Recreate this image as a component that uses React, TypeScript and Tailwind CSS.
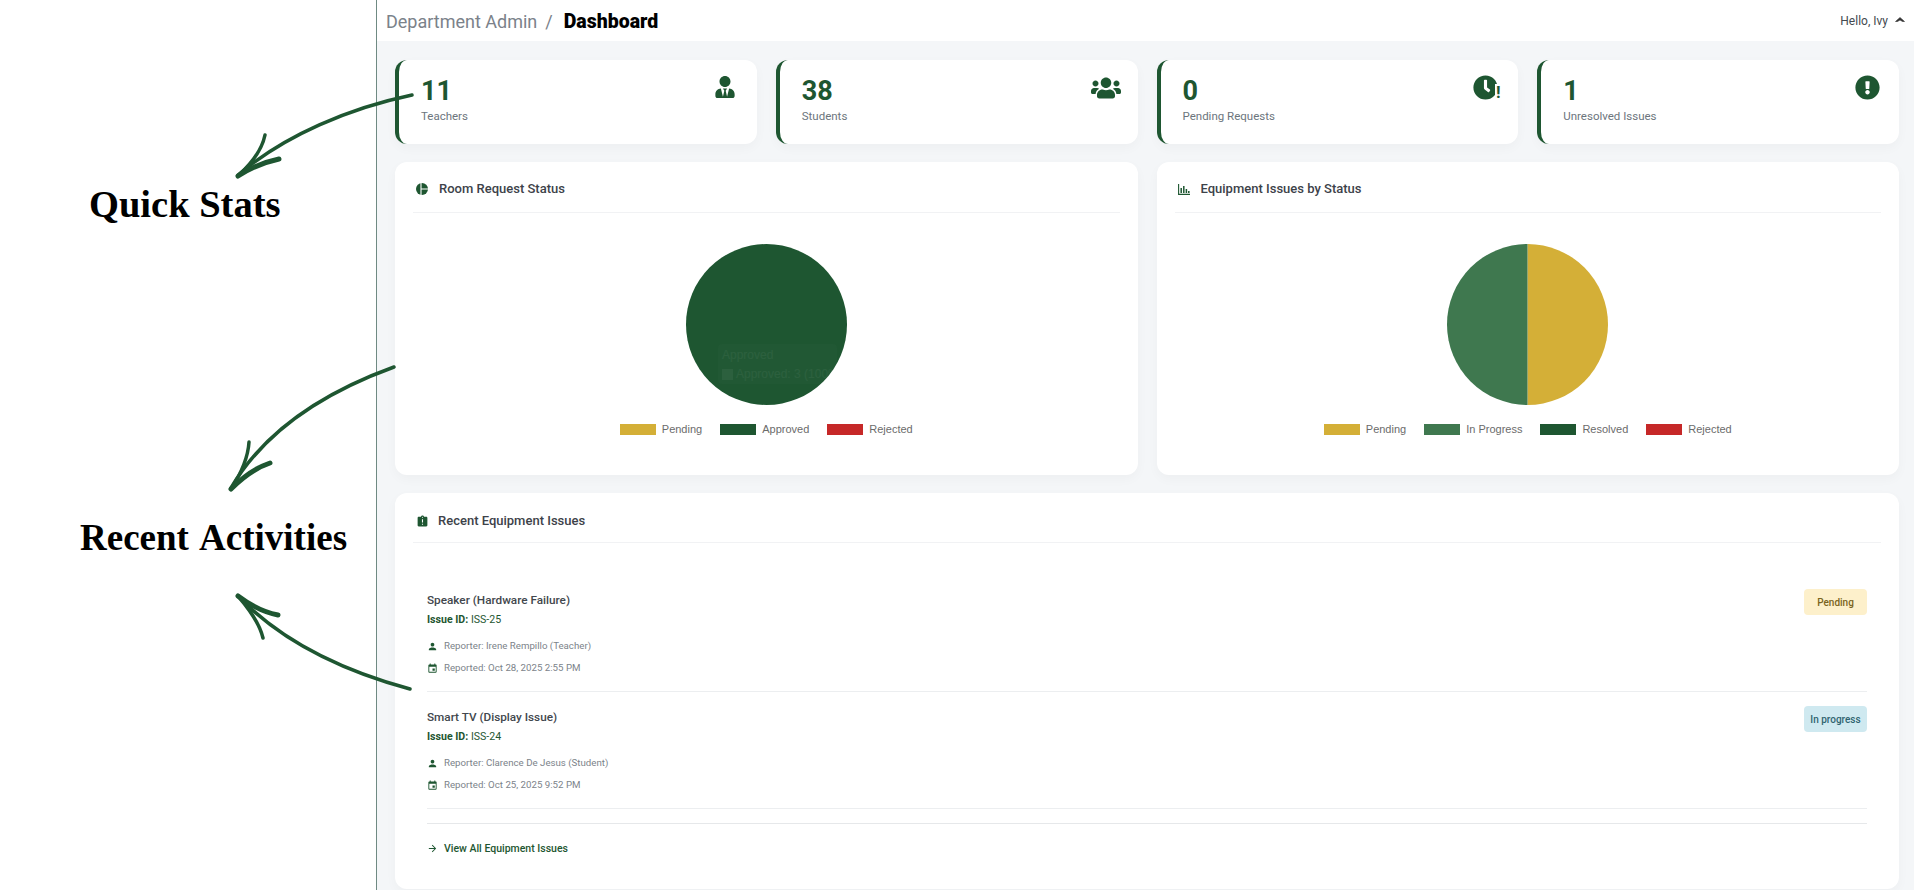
import { FaUserTie, FaUsers, FaClock, FaExclamationCircle } from "react-icons/fa"
import { MdAssignmentLate, MdPerson, MdEvent, MdArrowForward } from "react-icons/md"
import type { ReactNode } from "react"

const GREEN = "#1e5631"

function StatCard({ value, label, icon }: { value: string; label: string; icon: ReactNode }) {
  return (
    <div className="flex justify-between h-[84px] bg-white rounded-[12px] border-l-4 border-[#1e5631] pl-[22px] pr-[18px] pt-[14px] shadow-[0_4px_12px_rgba(0,0,0,0.03)]">
      <div>
        <div className="text-[27px] leading-[34px] font-bold text-[#1e5631]">{value}</div>
        <div className="text-[11.5px] leading-[16px] text-[#6c757d]">{label}</div>
      </div>
      <div className="text-[#1e5631] pt-[1px]">{icon}</div>
    </div>
  )
}

function Legend({ items }: { items: { label: string; color: string }[] }) {
  return (
    <div className="flex justify-center gap-[18px] mt-[18px] font-['Liberation_Sans',sans-serif] text-[11px] leading-[12px] text-[#6b6b6b]">
      {items.map((item) => (
        <div key={item.label} className="flex items-center gap-[6px]">
          <span className="w-[36px] h-[11px]" style={{ backgroundColor: item.color }} />
          <span>{item.label}</span>
        </div>
      ))}
    </div>
  )
}

function PieIcon() {
  return (
    <svg width="12" height="12" viewBox="0 0 12 12" className="block">
      <circle cx="6" cy="6" r="6" fill={GREEN} />
      <path d="M5 0V12M5 6H12" stroke="#ffffff" strokeWidth="1.1" />
    </svg>
  )
}

function BarsIcon() {
  return (
    <svg width="12" height="12" viewBox="0 0 12 12" className="block" fill="none" stroke={GREEN}>
      <path d="M0.6 1V11.4H12" strokeWidth="1.1" />
      <path d="M3.2 10V5M5.8 10V3M8.4 10V6M10.8 10V8" strokeWidth="1.5" />
    </svg>
  )
}

function ChartCard({ title, icon, children }: { title: string; icon: ReactNode; children: ReactNode }) {
  return (
    <div className="h-[313px] bg-white rounded-[12px] px-[18px] shadow-[0_4px_12px_rgba(0,0,0,0.03)]">
      <div className="flex items-center gap-[11px] h-[51px] pt-[4px] pl-[3px] border-b border-[#f1f2f4] text-[13px] font-medium text-[#3d4249]">
        {icon}
        {title}
      </div>
      {children}
    </div>
  )
}

function Issue({ title, id, reporter, date, badge, badgeClass }: { title: string; id: string; reporter: string; date: string; badge: string; badgeClass: string }) {
  return (
    <div className="flex justify-between h-[117px] border-b border-[#eceef0] pt-[14px]">
      <div>
        <div className="text-[11.75px] leading-[18px] mt-[2px] font-medium text-[#42474d]">{title}</div>
        <div className="text-[10.6px] leading-[16px] mt-[3px] text-[#1e5631]">
          <b>Issue ID:</b> {id}
        </div>
        <div className="flex items-center gap-[6px] text-[9.7px] leading-[14px] text-[#7c838a] mt-[11px]">
          <MdPerson className="text-[#1e5631] text-[11px]" />
          {reporter}
        </div>
        <div className="flex items-center gap-[6px] text-[9.7px] leading-[14px] text-[#7c838a] mt-[8px]">
          <MdEvent className="text-[#1e5631] text-[11px]" />
          {date}
        </div>
      </div>
      <span className={`h-[26px] w-[63px] rounded-[4px] flex items-center justify-center text-[10px] font-medium ${badgeClass}`}>{badge}</span>
    </div>
  )
}

export default function App() {
  return (
    <div className="relative flex w-[1914px] h-[890px] overflow-hidden bg-white font-['Roboto',sans-serif]">
      {/* annotation column */}
      <div className="w-[377px] shrink-0 border-r border-[#6f8a83] bg-white" />

      <div className="flex-1 flex flex-col bg-[#f4f6f8]">
        <header className="flex items-center justify-between h-[41px] bg-white pt-[1px] pl-[9px] pr-[9px]">
          <div className="flex items-center">
            <span className="text-[18px] text-[#7b828a]">Department Admin</span>
            <span className="text-[18px] text-[#7b828a] mx-[8px]">/</span>
            <span className="text-[19.5px] font-black text-black ml-[3px] mt-[1px]">Dashboard</span>
          </div>
          <div className="flex items-center gap-[7px] text-[12px] text-[#444a50]">
            Hello, Ivy
            <svg width="10" height="6" viewBox="0 0 10 6" className="mb-[3px]">
              <path d="M5 0.5 L9.5 4.5 L7.5 4.5 L5 3 L2.5 4.5 L0.5 4.5 Z" fill="#333333" stroke="#333333" strokeWidth="0.6" strokeLinejoin="round" />
            </svg>
          </div>
        </header>

        <main className="flex flex-col gap-[18px] pt-[19px] pl-[18px] pr-[15px]">
          <div className="grid grid-cols-4 gap-[19px]">
            <StatCard value="11" label="Teachers" icon={<FaUserTie className="text-[22px] mt-[1px] mr-[3px]" />} />
            <StatCard value="38" label="Students" icon={<FaUsers className="text-[30px] mt-[-2px] mr-[-1px]" />} />
            <StatCard
              value="0"
              label="Pending Requests"
              icon={
                <div className="relative mr-[2px]">
                  <FaClock className="text-[25px]" />
                  <span className="absolute left-[22px] top-[9px] w-[6px] bg-white text-center text-[17px] leading-[17px] font-bold">!</span>
                </div>
              }
            />
            <StatCard value="1" label="Unresolved Issues" icon={<FaExclamationCircle className="text-[25px] mr-[1px]" />} />
          </div>

          <div className="grid grid-cols-2 gap-[19px]">
            <ChartCard title="Room Request Status" icon={<PieIcon />}>
              <div className="relative flex justify-center pt-[31px]">
                <svg width="161" height="161" viewBox="0 0 161 161">
                  <circle cx="80.5" cy="80.5" r="80.5" fill={GREEN} />
                </svg>
                {/* tooltip fading out over the pie */}
                <div className="absolute left-[305px] top-[131px] w-[119px] h-[40px] rounded-[4px] bg-white/[0.015] px-[4px] pt-[3px] font-['Liberation_Sans',sans-serif] text-[12px] leading-[17px] text-white/[0.05] whitespace-nowrap">
                  <div>Approved</div>
                  <div className="flex items-center gap-[3px] mt-[2px]">
                    <span className="w-[11px] h-[11px] shrink-0 bg-white/[0.05]" />
                    Approved: 3 (100%)
                  </div>
                </div>
              </div>
              <Legend
                items={[
                  { label: "Pending", color: "#d4af37" },
                  { label: "Approved", color: GREEN },
                  { label: "Rejected", color: "#c62828" },
                ]}
              />
            </ChartCard>
            <ChartCard title="Equipment Issues by Status" icon={<BarsIcon />}>
              <div className="flex justify-center pt-[31px]">
                <svg width="161" height="161" viewBox="0 0 161 161">
                  <path d="M80.5 0 A80.5 80.5 0 0 1 80.5 161 Z" fill="#d4af37" />
                  <path d="M80.5 161 A80.5 80.5 0 0 1 80.5 0 Z" fill="#3f784f" />
                </svg>
              </div>
              <Legend
                items={[
                  { label: "Pending", color: "#d4af37" },
                  { label: "In Progress", color: "#3f784f" },
                  { label: "Resolved", color: GREEN },
                  { label: "Rejected", color: "#c62828" },
                ]}
              />
            </ChartCard>
          </div>

          <div className="h-[396px] bg-white rounded-[12px] px-[18px] shadow-[0_4px_12px_rgba(0,0,0,0.03)]">
            <div className="flex items-center gap-[9px] h-[50px] pt-[7px] pl-[3px] border-b border-[#f1f2f4] text-[13px] font-medium text-[#3d4249]">
              <MdAssignmentLate className="text-[#1e5631] text-[13px]" />
              Recent Equipment Issues
            </div>
            <div className="pt-[32px] px-[14px]">
              <Issue
                title="Speaker (Hardware Failure)"
                id="ISS-25"
                reporter="Reporter: Irene Rempillo (Teacher)"
                date="Reported: Oct 28, 2025 2:55 PM"
                badge="Pending"
                badgeClass="bg-[#fdf0cb] text-[#7a6420]"
              />
              <Issue
                title="Smart TV (Display Issue)"
                id="ISS-24"
                reporter="Reporter: Clarence De Jesus (Student)"
                date="Reported: Oct 25, 2025 9:52 PM"
                badge="In progress"
                badgeClass="bg-[#cfe9f0] text-[#2f6470]"
              />
              <div className="mt-[14px] border-t border-[#e6e8ea] pt-[17px] flex items-center gap-[6px] text-[10.5px] font-medium text-[#1e5631]">
                <MdArrowForward className="text-[11px]" />
                View All Equipment Issues
              </div>
            </div>
          </div>
        </main>
      </div>

      {/* hand-drawn annotations, free canvas on top of the page */}
      <div className="absolute left-[89px] top-[182px] font-['Liberation_Serif',serif] font-bold text-[38.5px] leading-[44px] text-black whitespace-nowrap">Quick Stats</div>
      <div className="absolute left-[80px] top-[516px] font-['Liberation_Serif',serif] font-bold text-[37px] [word-spacing:3px] leading-[44px] text-black whitespace-nowrap">Recent Activities</div>
      <svg className="absolute left-0 top-0 pointer-events-none" width="1914" height="890" viewBox="0 0 1914 890" fill="none" stroke={GREEN} strokeLinecap="round" strokeLinejoin="round">
        <path d="M412 95 C350 108 285 135 238 175" strokeWidth="3.5" />
        <path d="M265 135 C262 150 250 165 238 176" strokeWidth="3.5" />
        <path d="M279 159 C265 162 250 168 238 176" strokeWidth="5" />
        <path d="M394 367 C325 392 265 430 231 488" strokeWidth="3.5" />
        <path d="M249 442 C248 460 240 475 231 489" strokeWidth="3.5" />
        <path d="M270 463 C255 468 242 478 231 489" strokeWidth="5" />
        <path d="M410 689 C340 670 280 640 238 596" strokeWidth="3.5" />
        <path d="M278 615 C262 612 250 605 238 596" strokeWidth="5" />
        <path d="M263 638 C260 625 250 610 238 596" strokeWidth="3.5" />
      </svg>
    </div>
  )
}
